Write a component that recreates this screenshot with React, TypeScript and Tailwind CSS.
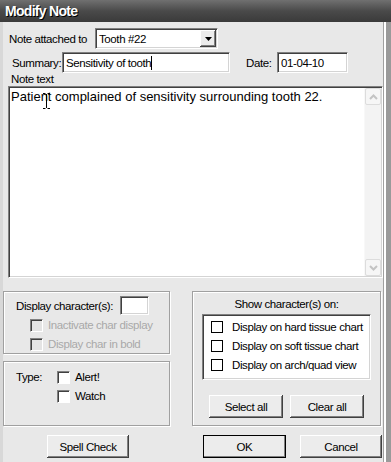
import React from "react";

const sunken =
  "border border-t-[#808080] border-l-[#808080] border-b-white border-r-white shadow-[inset_1px_1px_0_#404040,inset_-1px_-1px_0_#d4d4d4]";
const raised =
  "bg-[#ececec] shadow-[inset_-1px_-1px_0_#404040,inset_1px_1px_0_#ffffff,inset_-2px_-2px_0_#808080]";
const etched =
  "border border-[#a0a0a0] shadow-[inset_1px_1px_0_#ffffff,1px_1px_0_#ffffff]";

function Check({ disabled = false, flat = false }: { disabled?: boolean; flat?: boolean }) {
  if (flat) return <div className="w-[12px] h-[12px] border border-black bg-white shrink-0" />;
  return (
    <div
      className={`w-[13px] h-[13px] shrink-0 border border-t-[#808080] border-l-[#808080] border-b-white border-r-white shadow-[inset_1px_1px_0_#404040] ${
        disabled ? "bg-[#e4e4e4]" : "bg-white"
      }`}
    />
  );
}

function Btn({ label, w, def = false }: { label: string; w: number; def?: boolean }) {
  return (
    <div
      style={{ width: w }}
      className={`h-[23px] flex items-center justify-center text-black whitespace-nowrap ${raised} ${
        def ? "outline outline-1 outline-black -outline-offset-1" : ""
      }`}
    >
      {label}
    </div>
  );
}

export default function App() {
  return (
    <div
      className="w-[391px] h-[462px] overflow-hidden flex flex-col bg-[#e8e8e8] text-black text-[11.5px] tracking-[-0.4px] leading-[14px] whitespace-nowrap"
      style={{ fontFamily: '"Liberation Sans", Arial, sans-serif' }}
    >
      {/* title bar */}
      <div className="h-[22px] shrink-0 bg-gradient-to-b from-[#707070] via-[#4a4a4a] to-[#3a3a3a] flex items-center pl-[5px]">
        <span className="text-white font-bold text-[14px] tracking-[-0.7px] [text-shadow:1px_1px_0_#000]">
          Modify Note
        </span>
      </div>
      {/* body with frame */}
      <div className="flex-1 flex">
        <div className="w-[3px] bg-[#d8d8d8]" />
        <div className="flex-1 flex flex-col relative">
          {/* row 1 */}
          <div className="flex items-center mt-[6px] h-[21px]">
            <span className="ml-[6px] w-[86px]">Note attached to</span>
            <div className={`w-[123px] h-[21px] bg-white flex items-center relative ${sunken}`}>
              <span className="ml-[3px]">Tooth #22</span>
              <div className={`absolute right-[1px] top-[1px] w-[16px] h-[17px] flex items-center justify-center ${raised}`}>
                <svg width="7" height="4" viewBox="0 0 7 4">
                  <path d="M0 0h7L3.5 4z" fill="#000" />
                </svg>
              </div>
            </div>
          </div>
          {/* row 2 */}
          <div className="flex items-center mt-[3px] h-[21px]">
            <span className="ml-[9px] w-[50px]">Summary:</span>
            <div className={`w-[168px] h-[21px] bg-white flex items-center ${sunken}`}>
              <span className="ml-[3px]">Sensitivity of tooth</span>
              <span className="w-[1px] h-[14px] bg-black" />
            </div>
            <span className="ml-[16px] w-[31px]">Date:</span>
            <div className={`w-[71px] h-[21px] bg-white flex items-center ${sunken}`}>
              <span className="ml-[3px]">01-04-10</span>
            </div>
          </div>
          <div className="ml-[8px] h-[13px] leading-[12px]">Note text</div>
          {/* textarea */}
          <div className={`ml-[5px] w-[375px] h-[192px] bg-white flex relative ${sunken}`}>
            <div className="flex-1 pl-[2px] pt-[3px] text-[13px] tracking-normal">
              Patient complained of sensitivity surrounding tooth 22.
            </div>
            <svg className="absolute left-[33px] top-[6px]" width="9" height="16" viewBox="0 0 9 16">
              <path d="M1 0.5h2.5M5.5 0.5H8M4.5 1v14M1 15.5h2.5M5.5 15.5H8" stroke="#000" strokeWidth="1" fill="none" />
            </svg>
            {/* scrollbar */}
            <div className="w-[17px] mr-[1px] my-[1px] bg-[#f3f3f3] flex flex-col justify-between border-l border-[#f8f8f8]">
              <div className="h-[17px] bg-[#f6f6f6] border border-[#dcdcdc] rounded-[2px] flex items-center justify-center">
                <svg width="9" height="6" viewBox="0 0 9 6">
                  <path d="M1 5l3.5-3.5L8 5" stroke="#c4c4c4" strokeWidth="2" fill="none" />
                </svg>
              </div>
              <div className="h-[17px] bg-[#f6f6f6] border border-[#dcdcdc] rounded-[2px] flex items-center justify-center">
                <svg width="9" height="6" viewBox="0 0 9 6">
                  <path d="M1 1l3.5 3.5L8 1" stroke="#c4c4c4" strokeWidth="2" fill="none" />
                </svg>
              </div>
            </div>
          </div>
          {/* lower section */}
          <div className="flex mt-[13px]">
            <div className="flex flex-col">
              <div className={`w-[167px] h-[63px] ${etched} flex flex-col`}>
                <div className="flex items-center mt-[4px] ml-[12px]">
                  <span className="w-[104px]">Display character(s):</span>
                  <div className={`w-[29px] h-[19px] bg-white ${sunken}`} />
                </div>
                <div className="flex items-center ml-[26px] mt-[3px] text-[#a8a8a8]">
                  <Check disabled />
                  <span className="ml-[5px]">Inactivate char display</span>
                </div>
                <div className="flex items-center ml-[26px] mt-[5px] text-[#a8a8a8]">
                  <Check disabled />
                  <span className="ml-[5px]">Display char in bold</span>
                </div>
              </div>
              <div className={`w-[167px] h-[65px] mt-[7px] ${etched} flex`}>
                <span className="ml-[12px] mt-[8px] w-[41px]">Type:</span>
                <div className="flex flex-col mt-[8px]">
                  <div className="flex items-center">
                    <Check />
                    <span className="ml-[5px]">Alert!</span>
                  </div>
                  <div className="flex items-center mt-[5px]">
                    <Check />
                    <span className="ml-[5px]">Watch</span>
                  </div>
                </div>
              </div>
            </div>
            <div className={`ml-[22px] w-[189px] h-[135px] ${etched} flex flex-col items-center`}>
              <div className="mt-[5px]">Show character(s) on:</div>
              <div className={`mt-[3px] w-[169px] h-[66px] bg-white ${sunken} flex flex-col pl-[8px] pt-[5px] gap-[5px]`}>
                <div className="flex items-center">
                  <Check flat />
                  <span className="ml-[9px]">Display on hard tissue chart</span>
                </div>
                <div className="flex items-center">
                  <Check flat />
                  <span className="ml-[9px]">Display on soft tissue chart</span>
                </div>
                <div className="flex items-center">
                  <Check flat />
                  <span className="ml-[9px]">Display on arch/quad view</span>
                </div>
              </div>
              <div className="flex mt-[15px] gap-[7px]">
                <Btn label="Select all" w={74} />
                <Btn label="Clear all" w={74} />
              </div>
            </div>
          </div>
          {/* bottom buttons */}
          <div className="flex mt-[9px]">
            <div className="ml-[44px]">
              <Btn label="Spell Check" w={82} />
            </div>
            <div className="ml-[74px]">
              <Btn label="OK" w={83} def />
            </div>
            <div className="ml-[14px]">
              <Btn label="Cancel" w={82} />
            </div>
          </div>
        </div>
        <div className="w-[1px] bg-[#a0a0a0]" />
        <div className="w-[2px] bg-white" />
        <div className="w-[5px] bg-[#9a9a9a]" />
      </div>
    </div>
  );
}
